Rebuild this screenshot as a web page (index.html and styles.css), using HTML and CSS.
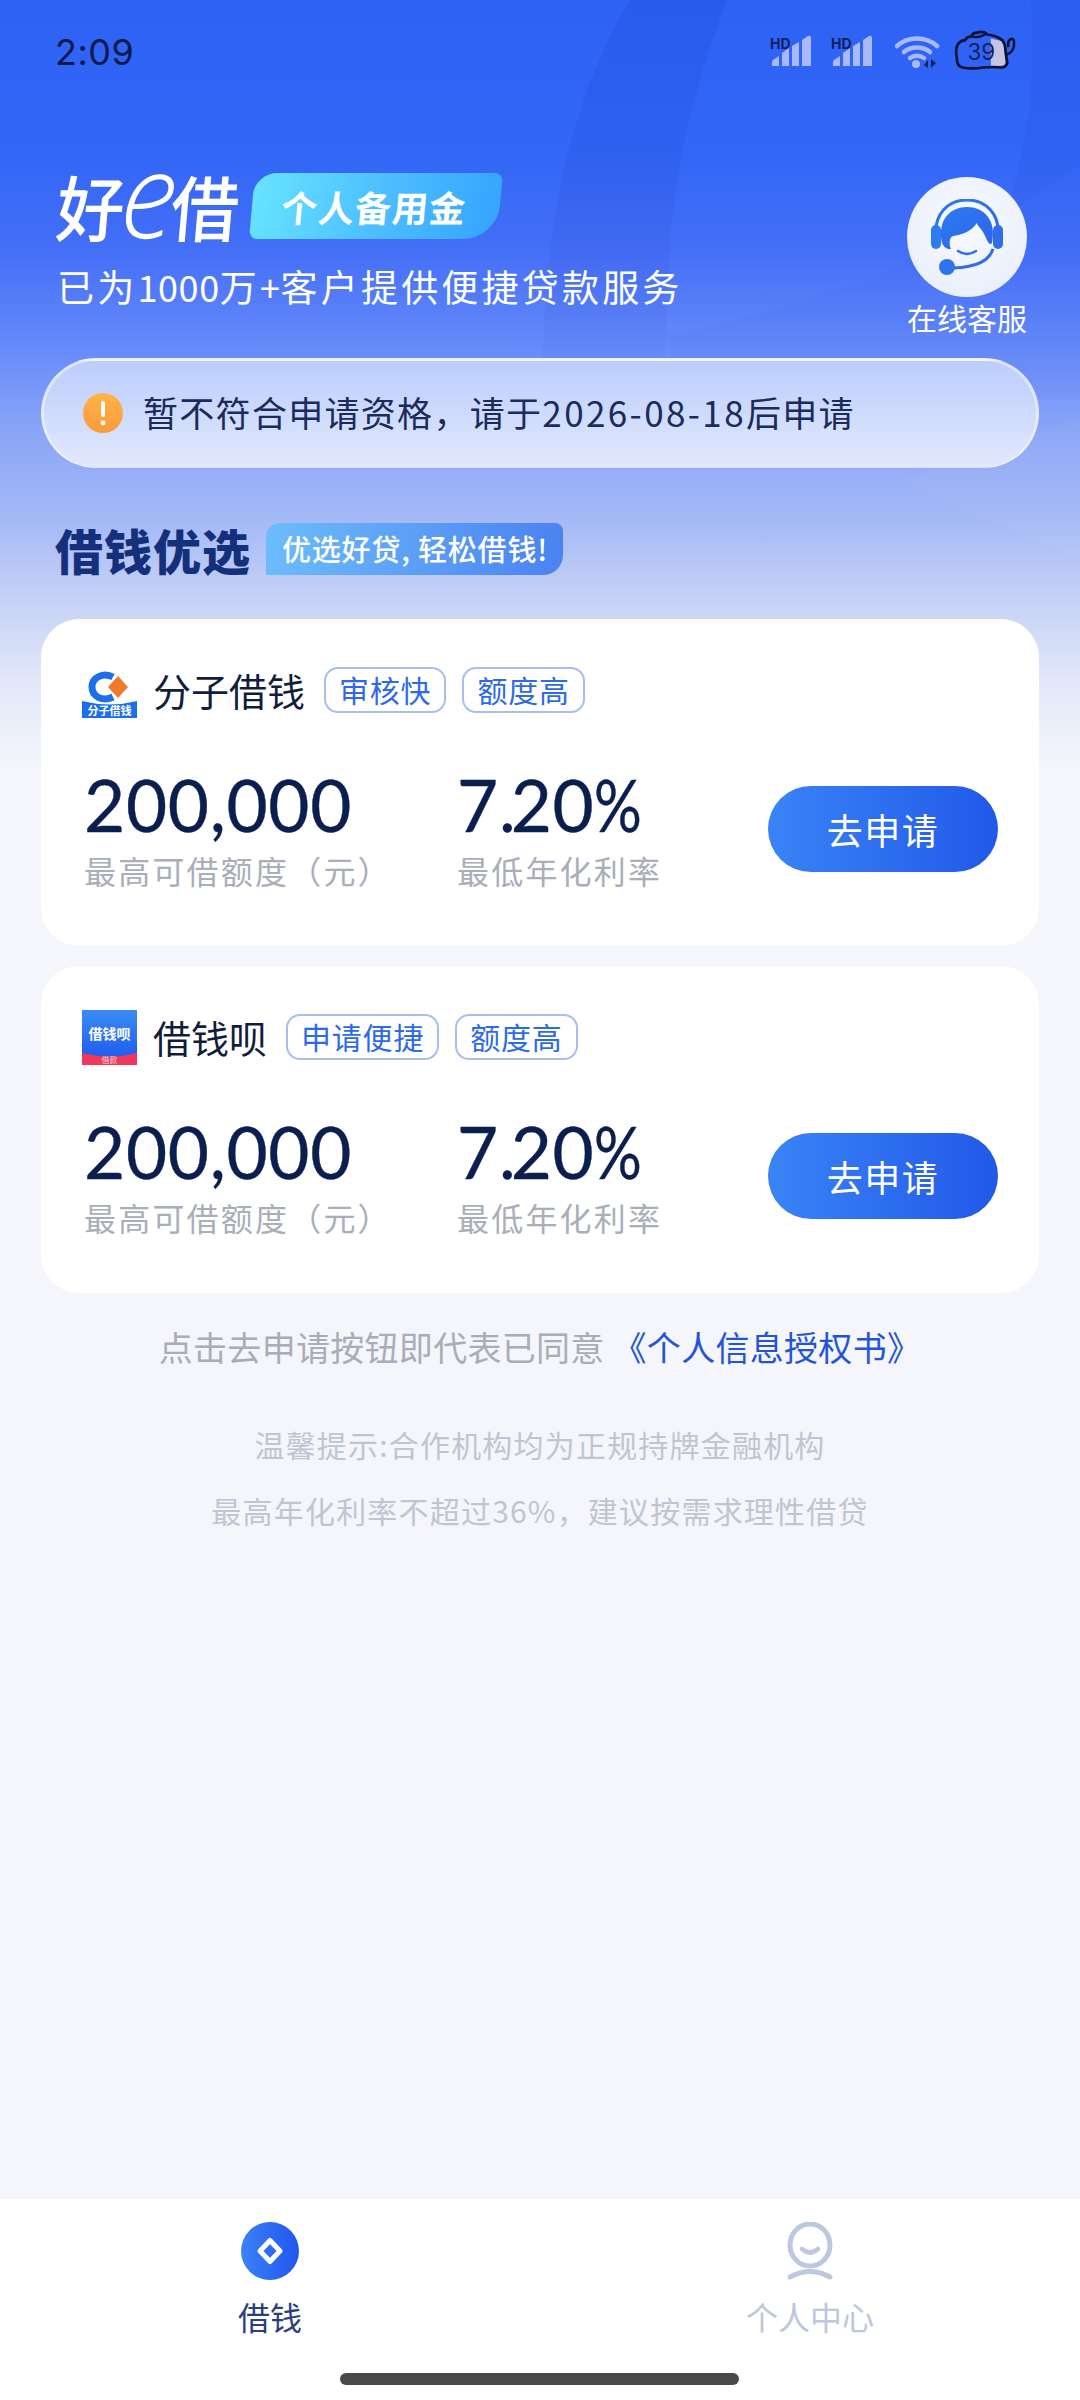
FILE: index.html
```html
<!DOCTYPE html>
<html lang="zh-CN">
<head>
<meta charset="utf-8">
<title>好e借</title>
<link rel="stylesheet" href="styles.css">
</head>
<body>
<div class="page">
  <svg class="bg-arcs" width="1080" height="720" viewBox="0 0 1080 720">
    <defs>
      <linearGradient id="fade" x1="0" y1="0" x2="0" y2="1">
        <stop offset="0" stop-color="#1c3cc0" stop-opacity=".2"/>
        <stop offset=".7" stop-color="#1c3cc0" stop-opacity=".09"/>
        <stop offset="1" stop-color="#1c3cc0" stop-opacity=".03"/>
      </linearGradient>
    </defs>
    <path d="M727 0 C692 90 672 180 669 267 L664 390 L542 390 C544 230 565 110 630 0 Z" fill="url(#fade)"/>
    <path d="M1031 0 C1036 70 1030 140 1005 215 L1080 165 L1080 0 Z" fill="#1c3cc0" opacity=".1"/>
    <path d="M669 335 C800 310 950 260 1080 165 L1080 400 L669 390 Z" fill="#1c3cc0" opacity=".035"/>
    <path d="M900 480 L1080 420 L1080 560 Z" fill="#ffffff" opacity=".03"/>
  </svg>

  <header class="status">
    <span class="time">2:09</span>
    <div class="status-icons">
      <svg class="sig" width="44" height="32" viewBox="0 0 44 32">
        <path d="M2 31 V27 Q2 26 3 25 L9 21 V31 Z M12 31 V18 L19 13 V31 Z M22 31 V11 L29 7 V31 Z M32 31 V5 L38 1 Q41 0 41 3 V31 Z" fill="#a9b9fb"/>
        <text class="hd" x="0" y="14">HD</text>
      </svg>
      <svg class="sig" width="44" height="32" viewBox="0 0 44 32">
        <path d="M2 31 V27 Q2 26 3 25 L9 21 V31 Z M12 31 V18 L19 13 V31 Z M22 31 V11 L29 7 V31 Z M32 31 V5 L38 1 Q41 0 41 3 V31 Z" fill="#a9b9fb"/>
        <text class="hd" x="0" y="14">HD</text>
      </svg>
      <svg class="wifi" width="46" height="34" viewBox="0 0 46 34">
        <path d="M2 11 C13 1 31 1 42 11" fill="none" stroke="#a9b9fb" stroke-width="4.5" stroke-linecap="round"/>
        <path d="M9 17 C16 11 28 11 35 17" fill="none" stroke="#a9b9fb" stroke-width="4.5" stroke-linecap="round"/>
        <path d="M15 23 C19 20 25 20 29 23" fill="none" stroke="#a9b9fb" stroke-width="4.5" stroke-linecap="round"/>
        <circle cx="21" cy="29" r="4" fill="#a9b9fb"/>
        <path d="M33 33 V25 L29 30 Z M36 24 V33 L41 28 Z" fill="#10205c"/>
      </svg>
      <svg class="batt" width="64" height="44" viewBox="0 0 66 44">
        <path d="M38 9 L50 12 Q52 14 52 22 Q54 32 53 37 L38 38 Z" fill="#c6c3e4"/>
        <path d="M11 11 Q14 7 18 7 Q19 3 24 3 Q31 1 34 5 Q44 6 50 11 Q53 15 53 20 Q54 30 55 34 Q54 38 50 39 Q40 38 30 39 Q18 41 9 39 Q3 38 3 30 Q1 20 4 15 Q7 11 11 11 Z" fill="none" stroke="#0b1230" stroke-width="2.8" stroke-linejoin="round"/>
        <path d="M18 7 Q25 9 32 5" fill="none" stroke="#0b1230" stroke-width="2.4"/>
        <path d="M54 26 Q62 23 62 14 Q62 8 58 10 Q55 12 56 18" fill="none" stroke="#0b1230" stroke-width="2.6"/>
        <text class="batt-num" x="14" y="31">39</text>
      </svg>
    </div>
  </header>

  <section class="hero">
    <div class="hero-left">
      <div class="brand">
        <span class="brand-name"><span class="brand-hao">好</span><span class="brand-e">e</span><span class="brand-jie">借</span></span>
        <span class="brand-tag"><span class="brand-tag-text">个人备用金</span></span>
      </div>
      <p class="hero-sub">已为<span class="sub-num">1000</span>万<span class="sub-num">+</span>客户提供便捷贷款服务</p>
    </div>
    <div class="service">
      <div class="service-circle">
        <svg width="72" height="76" viewBox="0 0 72 76">
          <defs>
            <linearGradient id="ag" x1="0" y1="0" x2="1" y2="1"><stop offset="0" stop-color="#2c7bf0"/><stop offset="1" stop-color="#2f63e8"/></linearGradient>
          </defs>
          <path d="M5 40 C2 14 18 1 36 1 C54 1 70 14 67 40" fill="none" stroke="url(#ag)" stroke-width="3"/>
          <rect x="0" y="26" width="10" height="24" rx="5" fill="#2f7bf0"/>
          <rect x="62" y="26" width="10" height="24" rx="5" fill="#2f6ee8"/>
          <path d="M11 44 C6 20 20 8 36 8 C52 8 66 20 61 44 C58 48 56 40 52 33 C50 29 47 28 46 24 C40 33 30 36 22 37 C18 38 18 46 20 50 C15 50 13 48 11 44 Z" fill="url(#ag)"/>
          <path d="M27 52 Q36 58 45 52" fill="none" stroke="#2f6ee8" stroke-width="2.5" stroke-linecap="round"/>
          <path d="M62 50 C58 62 46 68 22 69" fill="none" stroke="#2f6ee8" stroke-width="3"/>
          <circle cx="16" cy="68" r="8" fill="#2f74ec"/>
        </svg>
      </div>
      <span class="service-text">在线客服</span>
    </div>
  </section>

  <section class="alert">
    <svg class="alert-icon" width="40" height="40" viewBox="0 0 40 40">
      <defs><linearGradient id="og" x1="0" y1="0" x2="0" y2="1"><stop offset="0" stop-color="#ffb347"/><stop offset="1" stop-color="#fb9a3c"/></linearGradient></defs>
      <circle cx="20" cy="20" r="20" fill="url(#og)"/>
      <rect x="18" y="8" width="4" height="16" rx="2" fill="#fff"/>
      <circle cx="20" cy="30" r="2.4" fill="#fff"/>
    </svg>
    <span class="alert-text">暂不符合申请资格，请于<span class="alert-date">2026-08-18</span>后申请</span>
  </section>

  <section class="section-head">
    <h2 class="section-title">借钱优选</h2>
    <span class="section-tag">优选好贷, 轻松借钱!</span>
  </section>

  <article class="card">
    <div class="card-head">
      <svg class="logo logo-fz" width="55" height="48" viewBox="0 0 55 48">
        <path d="M31 7 C22 2 10 7 10 17 C10 27 21 32 31 27" fill="none" stroke="#1c6fe8" stroke-width="7"/>
        <path d="M36 6 L46 17 L36 28 L26 17 Z" fill="#f0792a"/>
        <path d="M0 31 Q28 38 55 31 V48 H0 Z" fill="#1c6fe8"/>
        <text class="logo-text" x="27.5" y="45" text-anchor="middle">分子借钱</text>
      </svg>
      <span class="card-name">分子借钱</span>
      <span class="tag">审核快</span>
      <span class="tag">额度高</span>
    </div>
    <div class="card-body">
      <div class="stat stat-amount"><div class="num">200,000</div><div class="lab">最高可借额度（元）</div></div>
      <div class="stat stat-rate"><div class="num">7<span class="num-dot">.</span>20<span class="num-pct">%</span></div><div class="lab">最低年化利率</div></div>
      <button class="apply">去申请</button>
    </div>
  </article>

  <article class="card">
    <div class="card-head">
      <svg class="logo" width="55" height="55" viewBox="0 0 55 55">
        <defs><linearGradient id="lb" x1="0" y1="0" x2="0" y2="1"><stop offset="0" stop-color="#3b8cf2"/><stop offset="1" stop-color="#1a55f0"/></linearGradient></defs>
        <rect width="55" height="55" fill="url(#lb)"/>
        <path d="M0 43 Q28 50 55 43 V55 H0 Z" fill="#f0385c"/>
        <text class="logo-text-b" x="27.5" y="29" text-anchor="middle">借钱呗</text>
        <text class="logo-text-c" x="27.5" y="53" text-anchor="middle">借款</text>
      </svg>
      <span class="card-name">借钱呗</span>
      <span class="tag">申请便捷</span>
      <span class="tag">额度高</span>
    </div>
    <div class="card-body">
      <div class="stat stat-amount"><div class="num">200,000</div><div class="lab">最高可借额度（元）</div></div>
      <div class="stat stat-rate"><div class="num">7<span class="num-dot">.</span>20<span class="num-pct">%</span></div><div class="lab">最低年化利率</div></div>
      <button class="apply">去申请</button>
    </div>
  </article>

  <p class="agree">点击去申请按钮即代表已同意 <span class="agree-link">《个人信息授权书》</span></p>
  <div class="hints">
    <p class="hint">温馨提示:合作机构均为正规持牌金融机构</p>
    <p class="hint">最高年化利率不超过36%，建议按需求理性借贷</p>
  </div>

  <nav class="tabbar">
    <div class="tabs">
      <div class="tab tab-active">
        <svg width="58" height="58" viewBox="0 0 58 58">
          <defs><linearGradient id="tg" x1="0" y1="0" x2="1" y2="0"><stop offset="0" stop-color="#3a82f6"/><stop offset="1" stop-color="#2156ee"/></linearGradient></defs>
          <circle cx="29" cy="29" r="29" fill="url(#tg)"/>
          <path d="M29 18.5 L39 29 L29 39.5 L19 29 Z" fill="#2f6bf0" stroke="#fff" stroke-width="5" stroke-linejoin="round"/>
        </svg>
        <span>借钱</span>
      </div>
      <div class="tab tab-idle">
        <svg width="46" height="58" viewBox="0 0 46 58">
          <ellipse cx="23" cy="23" rx="20" ry="21" fill="none" stroke="#bcc8e0" stroke-width="5"/>
          <path d="M15 27 Q23 34 31 27" fill="none" stroke="#bcc8e0" stroke-width="4.5" stroke-linecap="round"/>
          <path d="M3 55 Q23 44 43 55" fill="none" stroke="#bcc8e0" stroke-width="5" stroke-linecap="round"/>
        </svg>
        <span>个人中心</span>
      </div>
    </div>
    <div class="home-bar"></div>
  </nav>
</div>
</body>
</html>
```

FILE: styles.css
```css
* { box-sizing: border-box; }
html, body { margin: 0; padding: 0; }
body {
  font-family: "Noto Sans CJK SC", "Noto Sans", sans-serif;
  background: #f4f6fb;
}
p, h2 { margin: 0; }

.page {
  position: relative;
  width: 1080px;
  height: 2400px;
  overflow: hidden;
  display: flex;
  flex-direction: column;
  background: linear-gradient(180deg,
    #2d62f6 0, #3266f6 150px, #446ff7 250px, #6388f9 340px, #8aa5f7 430px,
    #a5b9f6 520px, #c6d2f6 600px, #e2e8f9 680px, #f4f6fb 770px);
}
.bg-arcs { position: absolute; left: 0; top: 0; }

.status, .hero, .alert, .section-head, .card, .agree, .hints, .tabbar { position: relative; flex: none; }

.status {
  height: 104px;
  padding: 0 62px 0 55px;
  display: flex;
  align-items: center;
  justify-content: space-between;
}
.time {
  font-family: "Inter", "Noto Sans", sans-serif;
  font-size: 36px;
  color: #0c1a4a;
  letter-spacing: .5px;
}
.status-icons { display: flex; align-items: center; gap: 17px; margin-top: -2px; }
.sig { overflow: visible; }
.hd { font-family: "Inter", sans-serif; font-size: 14px; font-weight: 700; fill: #10205c; }
.batt-num { font-family: "Inter", sans-serif; font-size: 23px; fill: #14205a; }
.wifi { margin-left: 3px; margin-top: 2px; }
.batt { margin-left: -4px; }

.hero {
  height: 254px;
  padding: 68px 53px 0 57px;
  display: flex;
  justify-content: space-between;
}
.brand { display: flex; align-items: center; height: 68px; gap: 12px; }
.brand-name {
  display: flex;
  align-items: center;
  width: 183px;
  height: 68px;
  color: #fff;
  white-space: nowrap;
  transform: skewX(-5deg);
}
.brand-hao, .brand-jie {
  font-size: 68px;
  line-height: 68px;
  font-weight: 500;
  transform: scaleY(1.05);
}
.brand-hao { margin-right: -3px; }
.brand-e {
  font-family: "Open Sans", sans-serif;
  font-style: italic;
  font-weight: 300;
  font-size: 118px;
  line-height: 68px;
  margin: -26px -6px 0 -3px;
  transform: scaleX(.95);
}
.brand-tag {
  width: 248px;
  height: 66px;
  border-radius: 22px 8px 34px 8px;
  background: linear-gradient(100deg, #67e4ff 0, #4bbcff 55%, #34a4ff 100%);
  transform: skewX(-5deg);
  display: flex;
  align-items: center;
  justify-content: center;
}
.brand-tag-text {
  font-size: 36px;
  font-weight: 700;
  color: #fff;
  letter-spacing: 1px;
  margin-right: 4px;
}
.hero-sub {
  margin-top: 24px;
  font-size: 37px;
  line-height: 44px;
  color: #fff;
  letter-spacing: 3.2px;
  white-space: nowrap;
}
.sub-num { font-size: 36px; letter-spacing: .6px; }
.service {
  width: 120px;
  margin-top: 5px;
  display: flex;
  flex-direction: column;
  align-items: center;
}
.service-circle {
  width: 120px;
  height: 120px;
  border-radius: 50%;
  background: radial-gradient(circle at 50% 40%, #f8faff 0, #e6ecfb 100%);
  display: flex;
  align-items: center;
  justify-content: center;
}
.service-text { margin-top: 0; font-size: 30px; line-height: 40px; color: #fff; white-space: nowrap; }

.alert {
  margin: 0 41px;
  height: 110px;
  border-radius: 55px;
  border: 3px solid rgba(255, 255, 255, .45);
  border-bottom-width: 1px;
  background: linear-gradient(180deg, #bccdfd 0, #e2e9fc 100%);
  padding: 0 0 0 39px;
  display: flex;
  align-items: center;
}
.alert-icon { flex: none; margin-top: -2px; }
.alert-text { margin: -5px 0 0 20px; font-size: 35px; letter-spacing: 1.3px; color: #1a2b5c; white-space: nowrap; }
.alert-date { letter-spacing: 2.4px; }

.section-head {
  margin-top: 55px;
  height: 52px;
  padding-left: 55px;
  display: flex;
  align-items: center;
}
.section-title { font-size: 48px; font-weight: 900; line-height: 52px; color: #14307c; letter-spacing: 1px; }
.section-tag {
  margin-left: 15px;
  height: 52px;
  width: 297px;
  border-radius: 14px 8px 20px 0;
  background: linear-gradient(90deg, #6cbcfc 0, #4b82f0 100%);
  color: #fff;
  font-size: 29px;
  font-weight: 500;
  line-height: 50px;
  padding-left: 16px;
  letter-spacing: .8px;
  white-space: nowrap;
}

.card {
  margin: 44px 41px 0;
  height: 327px;
  border-radius: 38px;
  background: #fff;
  padding: 46px 41px 0;
}
.card + .card { margin-top: 20px; }
.card-head { display: flex; align-items: center; height: 50px; }
.logo { flex: none; }
.logo-fz { margin-top: 8px; }
.card-name { margin: 0 19px 0 16px; font-size: 38px; line-height: 46px; color: #111d3c; white-space: nowrap; }
.tag {
  height: 46px;
  padding: 0 13px;
  margin-right: 16px;
  border: 2px solid #a8bdf0;
  border-radius: 14px;
  font-size: 30px;
  line-height: 41px;
  letter-spacing: .8px;
  color: #2e6ae6;
  white-space: nowrap;
}
.card-body { margin-top: 57px; display: flex; align-items: center; }
.stat { flex: none; padding-left: 2px; }
.stat-amount { width: 373px; }
.stat-rate { width: 311px; }
.num {
  font-family: "Lato", "Inter", sans-serif;
  font-size: 71px;
  line-height: 66px;
  letter-spacing: .7px;
  color: #0b1f4f;
  -webkit-text-stroke: .4px #0b1f4f;
  white-space: nowrap;
}
.num-dot { letter-spacing: -7px; margin-right: 2px; }
.num-pct { display: inline-block; transform: scaleX(.84); transform-origin: left center; }
.lab { margin-top: 11px; font-size: 32px; line-height: 42px; letter-spacing: 2.2px; color: #a9aeb9; white-space: nowrap; }
.apply {
  width: 230px;
  height: 86px;
  margin: -5px 0 0 2px;
  border: 0;
  border-radius: 43px;
  background: linear-gradient(90deg, #3a84f7 0, #2158e8 100%);
  color: #fff;
  font-family: inherit;
  font-size: 36px;
  letter-spacing: 1.5px;
}

.agree {
  margin-top: 29px;
  font-size: 34px;
  line-height: 50px;
  letter-spacing: .3px;
  color: #a8adb9;
  text-align: center;
}
.agree-link { color: #2354d8; }
.hints { margin-top: 39px; }
.hint { font-size: 30px; line-height: 66px; color: #c1c5d1; text-align: center; letter-spacing: 1.2px; }

.tabbar {
  margin-top: auto;
  height: 201px;
  background: #fff;
}
.tabs { display: flex; padding-top: 23px; }
.tab {
  width: 540px;
  display: flex;
  flex-direction: column;
  align-items: center;
  font-size: 32px;
  line-height: 44px;
}
.tab svg { display: block; margin-bottom: 14px; }
.tab-active { color: #2b3f80; }
.tab-idle { color: #bcc6dc; }
.home-bar {
  position: absolute;
  left: 340px;
  top: 174px;
  width: 399px;
  height: 12px;
  border-radius: 6px;
  background: #4a4a4a;
}
.logo-text { font-size: 11px; font-weight: 700; fill: #fff; }
.logo-text-b { font-size: 14px; font-weight: 700; fill: #fff; }
.logo-text-c { font-size: 8px; fill: #ffd5d5; }
```
